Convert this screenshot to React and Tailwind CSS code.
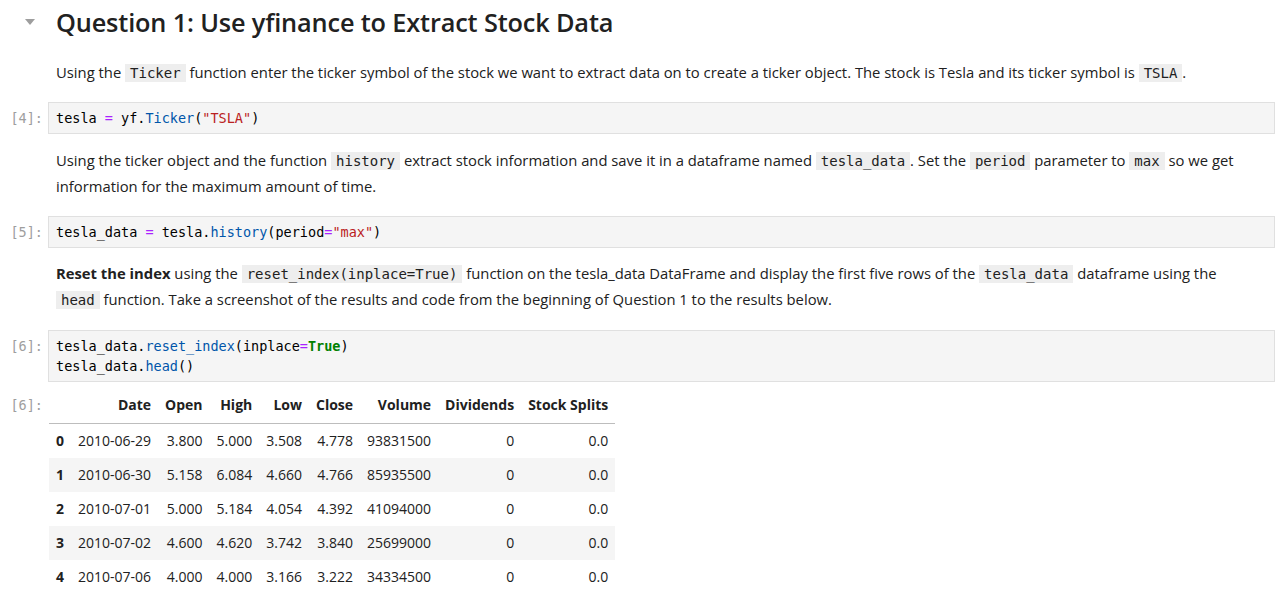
import React from "react";

// inline code chip used inside markdown text
function C({ children }) {
  return (
    <code className="bg-[#eeeeee] px-[5px] py-[1px] font-['DejaVu_Sans_Mono',monospace] text-[14px] text-[#212121]">
      {children}
    </code>
  );
}

function Prompt({ children, className = "" }) {
  return (
    <div
      className={`w-[48px] shrink-0 pr-[5px] text-right font-['DejaVu_Sans_Mono',monospace] text-[13.5px] text-[#9e9e9e] ${className}`}
    >
      {children}
    </div>
  );
}

function CodeCell({ n, lines }) {
  return (
    <div className="flex">
      <Prompt className="pt-[6px] leading-[20px]">[{n}]:</Prompt>
      <div className="mr-[5px] flex-1 border border-[#e0e0e0] bg-[#f5f5f5] px-[7px] py-[5px] font-['DejaVu_Sans_Mono',monospace] text-[13.5px] leading-[20px] text-black">
        {lines.map((l, i) => (
          <div key={i} className="whitespace-pre">
            {l}
          </div>
        ))}
      </div>
    </div>
  );
}

const Op = ({ children }) => <span className="text-[#aa22ff]">{children}</span>;
const Prop = ({ children }) => <span className="text-[#0055aa]">{children}</span>;
const Str = ({ children }) => <span className="text-[#ba2121]">{children}</span>;
const Kw = ({ children }) => <span className="font-bold text-[#008000]">{children}</span>;

const rows = [
  ["0", "2010-06-29", "3.800", "5.000", "3.508", "4.778", "93831500", "0", "0.0"],
  ["1", "2010-06-30", "5.158", "6.084", "4.660", "4.766", "85935500", "0", "0.0"],
  ["2", "2010-07-01", "5.000", "5.184", "4.054", "4.392", "41094000", "0", "0.0"],
  ["3", "2010-07-02", "4.600", "4.620", "3.742", "3.840", "25699000", "0", "0.0"],
  ["4", "2010-07-06", "4.000", "4.000", "3.166", "3.222", "34334500", "0", "0.0"],
];

const heads = ["", "Date", "Open", "High", "Low", "Close", "Volume", "Dividends", "Stock Splits"];

export default function App() {
  return (
    <div className="min-h-screen w-[1280px] bg-white font-['Open_Sans',sans-serif] text-[#212121]">
      {/* heading */}
      <div className="flex items-center pt-[4px]">
        <div className="flex w-[48px] shrink-0 justify-start pl-[25px]">
          <svg width="10" height="6" viewBox="0 0 10 6">
            <path d="M0 0 L10 0 L5 6 Z" fill="#9e9e9e" />
          </svg>
        </div>
        <h1 className="pl-[8px] text-[25.3px] font-semibold leading-[36px] tracking-[-0.15px]">
          Question 1: Use yfinance to Extract Stock Data
        </h1>
      </div>

      <div className="flex pt-[20px]">
        <div className="w-[48px] shrink-0" />
        <p className="pl-[8px] text-[14.8px] leading-[25px]">
          Using the <C>Ticker</C> function enter the ticker symbol of the stock we want to extract data on to create a ticker object. The stock is Tesla and its ticker symbol is <C>TSLA</C>.
        </p>
      </div>

      <div className="pt-[16px]">
        <CodeCell
          n={4}
          lines={[
            <>
              tesla <Op>=</Op> yf.<Prop>Ticker</Prop>(<Str>"TSLA"</Str>)
            </>,
          ]}
        />
      </div>

      <div className="flex pt-[14px]">
        <div className="w-[48px] shrink-0" />
        <p className="pl-[8px] pr-[20px] text-[14.8px] leading-[25px]">
          Using the ticker object and the function <C>history</C> extract stock information and save it in a dataframe named <C>tesla_data</C>. Set the <C>period</C> parameter to <C>max</C> so we get information for the maximum amount of time.
        </p>
      </div>

      <div className="pt-[17px]">
        <CodeCell
          n={5}
          lines={[
            <>
              tesla_data <Op>=</Op> tesla.<Prop>history</Prop>(period<Op>=</Op>
              <Str>"max"</Str>)
            </>,
          ]}
        />
      </div>

      <div className="flex pt-[13px]">
        <div className="w-[48px] shrink-0" />
        <p className="pl-[8px] pr-[40px] text-[14.8px] leading-[25px]">
          <b className="font-bold">Reset the index</b> using the <C>reset_index(inplace=True)</C> function on the tesla_data DataFrame and display the first five rows of the <C>tesla_data</C> dataframe using the <C>head</C> function. Take a screenshot of the results and code from the beginning of Question 1 to the results below.
        </p>
      </div>

      <div className="pt-[17px]">
        <CodeCell
          n={6}
          lines={[
            <>
              tesla_data.<Prop>reset_index</Prop>(inplace<Op>=</Op>
              <Kw>True</Kw>)
            </>,
            <>
              tesla_data.<Prop>head</Prop>()
            </>,
          ]}
        />
      </div>

      {/* output */}
      <div className="flex pt-[13px]">
        <Prompt className="leading-[20px]">[6]:</Prompt>
        <div className="pl-[1px]">
          <table className="border-collapse text-[14px] text-[#212121]">
            <thead>
              <tr className="border-b border-[#bdbdbd]">
                {heads.map((h, i) => (
                  <th key={i} className="whitespace-nowrap px-[7px] pb-[8px] pt-0 text-right font-bold leading-[20px]">
                    {h}
                  </th>
                ))}
              </tr>
            </thead>
            <tbody>
              {rows.map((r, ri) => (
                <tr key={ri} className={ri % 2 === 1 ? "bg-[#f5f5f5]" : ""}>
                  {r.map((c, ci) => (
                    <td
                      key={ci}
                      className={`whitespace-nowrap px-[7px] py-[7px] leading-[20px] ${ci === 0 ? "text-left font-bold" : "text-right"}`}
                    >
                      {c}
                    </td>
                  ))}
                </tr>
              ))}
            </tbody>
          </table>
        </div>
      </div>
    </div>
  );
}
